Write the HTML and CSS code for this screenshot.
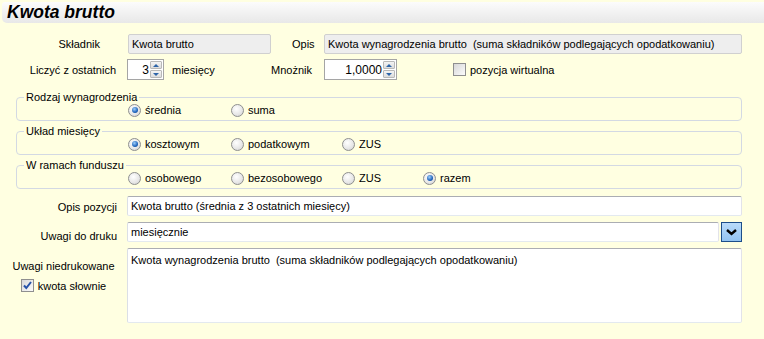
FILE: index.html
```html
<!DOCTYPE html>
<html lang="pl">
<head>
  <meta charset="UTF-8" />
  <meta name="viewport" content="width=device-width, initial-scale=1.0" />
  <title>Kwota brutto</title>
  <link rel="stylesheet" href="styles.css">
</head>
<body>
  <div class="header">
    <h1>Kwota brutto</h1>
  </div>

  <div class="form">
    <div class="row row-top">
      <label class="lbl lbl-first">Składnik</label>
      <div class="textbox readonly short">Kwota brutto</div>
      <label class="lbl-opis">Opis</label>
      <div class="textbox readonly grow">Kwota wynagrodzenia brutto&nbsp; (suma składników podlegających opodatkowaniu)</div>
    </div>

    <div class="row row-second">
      <label class="lbl lbl-count">Liczyć z ostatnich</label>
      <div class="spin spin-small">
        <span class="spin-value">3</span>
        <span class="spin-buttons"><i class="up"></i><i class="down"></i></span>
      </div>
      <span class="unit">miesięcy</span>
      <label class="lbl-mult">Mnożnik</label>
      <div class="spin spin-wide">
        <span class="spin-value">1,0000</span>
        <span class="spin-buttons"><i class="up"></i><i class="down"></i></span>
      </div>
      <label class="check check-virtual"><span class="box"></span>pozycja wirtualna</label>
    </div>

    <div class="group group-first">
      <span class="group-title">Rodzaj wynagrodzenia</span>
      <div class="options">
        <label class="option"><span class="radio on"></span>średnia</label>
        <label class="option"><span class="radio"></span>suma</label>
      </div>
    </div>

    <div class="group">
      <span class="group-title">Układ miesięcy</span>
      <div class="options">
        <label class="option"><span class="radio on"></span>kosztowym</label>
        <label class="option"><span class="radio"></span>podatkowym</label>
        <label class="option"><span class="radio"></span>ZUS</label>
      </div>
    </div>

    <div class="group">
      <span class="group-title">W ramach funduszu</span>
      <div class="options">
        <label class="option"><span class="radio"></span>osobowego</label>
        <label class="option"><span class="radio"></span>bezosobowego</label>
        <label class="option"><span class="radio"></span>ZUS</label>
        <label class="option"><span class="radio on"></span>razem</label>
      </div>
    </div>

    <div class="row row-field">
      <label class="lbl lbl-field">Opis pozycji</label>
      <div class="textbox grow">Kwota brutto (średnia z 3 ostatnich miesięcy)</div>
    </div>

    <div class="row row-field">
      <label class="lbl lbl-field lbl-low">Uwagi do druku</label>
      <div class="combo">
        <div class="textbox grow combo-text">miesięcznie</div>
        <span class="combo-btn">
          <svg width="19" height="18" viewBox="0 0 19 18"><path d="M5 7 L9.5 11 L14 7" fill="none" stroke="#000" stroke-width="2.4"/></svg>
        </span>
      </div>
    </div>

    <div class="row row-notes">
      <div class="notes-side">
        <span class="notes-label">Uwagi niedrukowane</span>
        <label class="check"><span class="box on">
          <svg width="11" height="11" viewBox="0 0 11 11"><path d="M2 5.5 L4.3 8 L9 2" fill="none" stroke="#2552a8" stroke-width="2"/></svg>
        </span>kwota słownie</label>
      </div>
      <div class="textbox grow notes-area">Kwota wynagrodzenia brutto&nbsp; (suma składników podlegających opodatkowaniu)</div>
    </div>
  </div>
</body>
</html>
```

FILE: styles.css
```css
body {
  margin: 0;
  background: #ffffe1;
  color: #000;
  font-family: 'Liberation Sans', Arial, sans-serif;
  font-size: 11px;
}

.header {
  margin: 2px 0 0 2px;
  height: 21px;
  background: linear-gradient(to bottom, #fcfcfc, #e8e8e8);
  border-radius: 3px 0 0 5px;
}

.header h1 {
  margin: 0;
  padding-left: 5px;
  font-size: 17.5px;
  line-height: 21px;
  font-weight: bold;
  font-style: italic;
}

.form {
  padding: 11px 22px 0 0;
}

.row {
  display: flex;
  align-items: center;
}

.lbl {
  width: 127px;
  flex: none;
  box-sizing: border-box;
  text-align: right;
}

.lbl-first { padding-right: 27px; }
.lbl-count { padding-right: 11px; }
.lbl-field { padding-right: 10px; padding-top: 2px; }

.lbl-low {
  align-self: flex-end;
  padding-top: 0;
  line-height: 12px;
}

.row-top { height: 20px; }

.row-second {
  height: 21px;
  margin-top: 5px;
}

.textbox {
  box-sizing: border-box;
  height: 20px;
  line-height: 18px;
  padding: 0 3px;
  background: #fff;
  border: 1px solid #e2e3ea;
  border-top-color: #abadb3;
  border-left-color: #dbdfe6;
  border-bottom-color: #e3e9ef;
  border-radius: 2px;
  white-space: nowrap;
  overflow: hidden;
}

.textbox.readonly {
  background: #eeeeee;
  border: 1px solid #d0d0d0;
}

.short { width: 143px; margin-left: 1px; }
.grow { flex: 1; }

.lbl-opis {
  margin-left: 21px;
  width: 32px;
  flex: none;
}

.spin {
  box-sizing: border-box;
  height: 21px;
  display: flex;
  align-items: center;
  background: #fff;
  border: 1px solid #a5a5a5;
  padding: 1px;
}

.spin-small { width: 37px; }
.spin-wide { width: 73px; }

.spin-value {
  flex: 1;
  text-align: right;
  padding-right: 1px;
  font-size: 12px;
}

.spin-buttons {
  display: flex;
  flex-direction: column;
  gap: 1px;
  width: 12px;
  height: 17px;
}

.spin-buttons i {
  flex: 1;
  display: flex;
  align-items: center;
  justify-content: center;
  background: linear-gradient(to bottom, #f4f4f4, #dcdcdc);
  border: 1px solid #b8b8b8;
  border-radius: 1px;
}

.spin-buttons i::after {
  content: '';
  border-left: 3px solid transparent;
  border-right: 3px solid transparent;
}

.spin-buttons .up::after { border-bottom: 3px solid #2d64a8; }
.spin-buttons .down::after { border-top: 3px solid #2d64a8; }

.unit {
  margin-left: 8px;
  width: 99px;
  flex: none;
}

.lbl-mult {
  width: 53px;
  flex: none;
}

.check {
  display: flex;
  align-items: center;
  gap: 4px;
}

.check-virtual { margin-left: 56px; }

.box {
  box-sizing: border-box;
  width: 13px;
  height: 13px;
  display: flex;
  align-items: center;
  justify-content: center;
  border: 1px solid #8f8f8f;
  background: linear-gradient(to bottom right, #d8d8d8, #fbfbfb);
}

.group {
  position: relative;
  box-sizing: border-box;
  height: 24px;
  margin: 10px 0 0 16px;
  border: 1px solid #d3d9e3;
  border-radius: 4px;
}

.group-first { margin-top: 17px; }

.group-title {
  position: absolute;
  left: 7px;
  top: -8px;
  padding: 0 2px;
  background: #ffffe1;
  line-height: 14px;
}

.options {
  display: grid;
  grid-template-columns: 103px 111px 81px auto;
  align-items: center;
  height: 22px;
  padding: 2px 0 0 111px;
  box-sizing: border-box;
}

.option {
  display: flex;
  align-items: center;
  gap: 4px;
}

.radio {
  box-sizing: border-box;
  width: 13px;
  height: 13px;
  display: flex;
  align-items: center;
  justify-content: center;
  border: 1px solid #8e8f8f;
  border-radius: 50%;
  background: radial-gradient(circle at 40% 35%, #ffffff, #e6e6e6 60%, #cbcbcb);
}

.radio.on::after {
  content: '';
  width: 6px;
  height: 6px;
  border-radius: 50%;
  background: radial-gradient(circle at 40% 35%, #9fd0fb, #2165bd 60%, #0c3c7c);
}

.row-field {
  height: 20px;
  margin-top: 7px;
}

.row-field + .row-field {
  margin-top: 6px;
}

.combo {
  flex: 1;
  display: flex;
  gap: 2px;
}

.combo-text {
  line-height: 14px;
  padding-top: 2px;
}

.combo-btn {
  box-sizing: border-box;
  width: 21px;
  height: 20px;
  display: flex;
  align-items: center;
  justify-content: center;
  background: linear-gradient(to bottom, #b9dbfa, #92c3f1);
  border: 1px solid #1d4e8a;
}

.row-notes {
  align-items: flex-start;
  margin-top: 6px;
}

.notes-side {
  width: 127px;
  flex: none;
  display: flex;
  flex-direction: column;
  align-items: center;
  padding-top: 11px;
  gap: 6px;
}

.notes-label {
  line-height: 14px;
}

.notes-area {
  height: 75px;
  line-height: 14px;
  padding-top: 4px;
  white-space: normal;
}
```
